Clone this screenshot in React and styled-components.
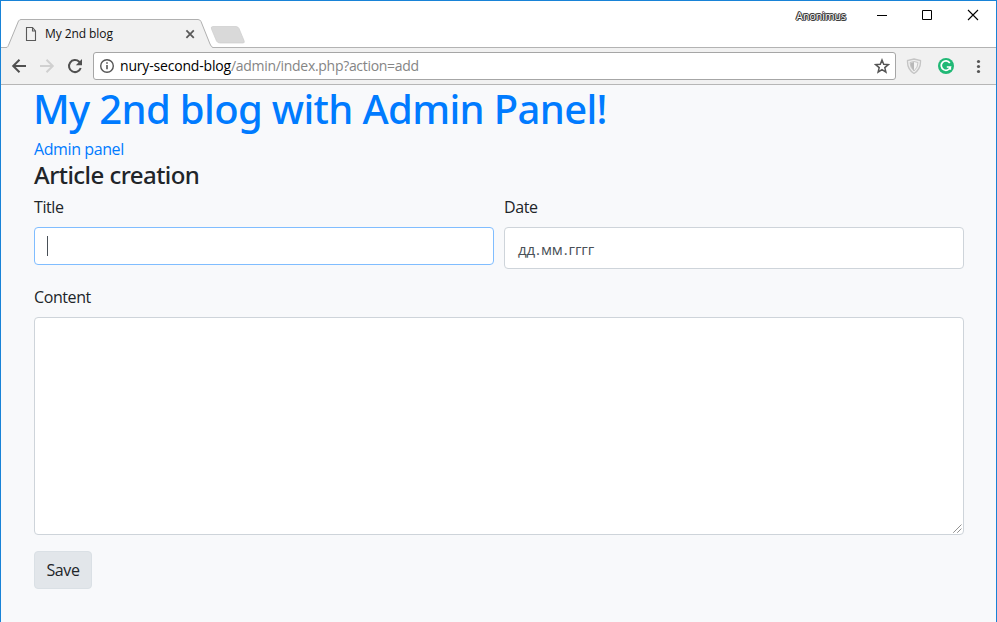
import React from "react";
import styled, { createGlobalStyle } from "styled-components";

const GlobalStyle = createGlobalStyle`
  *, *::before, *::after { box-sizing: border-box; }
  body { margin: 0; background: #f8f9fb; overflow: hidden; }
`;

const BrowserWindow = styled.div`
  display: flex;
  flex-direction: column;
  height: 622px;
  border: 1px solid #1883d7;
  border-bottom: 0;
  background: #f8f9fb;
  font-family: "Open Sans", "Noto Sans", sans-serif;
`;

const TabStrip = styled.header`
  display: flex;
  height: 47px;
  background: #fff;
  box-shadow: inset 0 -1px #b3b3b3;
`;

const Tab = styled.div`
  display: grid;
  width: 207px;
  height: 29px;
  margin: 18px 0 0 5px;
  > * { grid-area: 1 / 1; }
`;

const TabShape = styled.svg`
  width: 207px;
  height: 29px;
`;

const TabContent = styled.div`
  display: flex;
  align-items: center;
  padding: 0 15px 0 19px;
  height: 29px;
`;

const TabTitle = styled.span`
  flex: 1;
  margin-left: 4px;
  font-size: 12px;
  line-height: 16px;
  letter-spacing: -0.08px;
  color: #111;
`;

const NewTab = styled.svg`
  width: 38px;
  height: 20px;
  margin: 24px 0 0 -5px;
`;

const WindowControls = styled.div`
  display: flex;
  align-items: flex-start;
  margin-left: auto;
  padding: 7px 17px 0 0;
`;

const UserName = styled.span`
  margin-right: 30px;
  font-size: 10.5px;
  line-height: 16px;
  color: #fff;
  text-shadow: 1px 0 #333, -1px 0 #333, 0 1px #333, 0 -1px #333, 1px 1px #555, -1px -1px #777;
`;

const ControlIcon = styled.svg`
  width: 12px;
  height: 12px;
  margin: 1px 0 0 ${(p) => p.$gap || 0}px;
  fill: none;
  stroke: #000;
`;

const Toolbar = styled.nav`
  display: flex;
  align-items: center;
  height: 37px;
  flex: none;
  padding: 0 9px 1px 10px;
  background: #f1f1f1;
  border-bottom: 1px solid #b6b6b6;
`;

const ToolIcon = styled.svg`
  flex: none;
  width: 16px;
  height: 16px;
  margin-right: ${(p) => p.$gap || 0}px;
`;

const AddressBar = styled.div`
  display: flex;
  align-items: center;
  width: 803px;
  height: 28px;
  margin-right: 10px;
  padding: 0 5px;
  border: 1px solid #a6a6a6;
  border-radius: 3px;
  background: #fff;
`;

const Address = styled.div`
  flex: 1;
  padding-top: 1px;
  font-size: 14px;
  line-height: 20px;
  letter-spacing: -0.3px;
  color: #858585;
`;

const Host = styled.span`
  color: #000;
  letter-spacing: -0.18px;
`;

const Page = styled.main`
  padding: 1px 32px 0 33px;
  font-size: 16px;
  line-height: 24px;
  letter-spacing: -0.4px;
  color: #212529;
`;

const SiteTitle = styled.h1`
  margin: 0 0 5px -1px;
  font: 500 40px/46px "Noto Sans", sans-serif;
  letter-spacing: -0.65px;
  color: #007bff;
`;

const AdminLink = styled.a`
  display: block;
  width: max-content;
  color: #007bff;
  text-decoration: none;
`;

const FormTitle = styled.h2`
  margin: 0 0 7px;
  font: 500 24px/27px "Noto Sans", sans-serif;
  letter-spacing: -0.55px;
`;

const FieldRow = styled.div`
  display: grid;
  grid-template-columns: 1fr 1fr;
  gap: 10px;
  height: 90px;
`;

const Field = styled.div`
  display: flex;
  flex-direction: column;
`;

const Label = styled.label`
  margin-bottom: 8px;
  line-height: 24px;
`;

const InputBox = styled.div`
  display: flex;
  align-items: center;
  height: ${(p) => p.$height}px;
  padding: 0 12px;
  border: 1px solid ${(p) => (p.$focused ? "#80bdff" : "#ced4da")};
  border-radius: 4px;
  background: #fff;
`;

const Caret = styled.span`
  width: 1px;
  height: 20px;
  background: #495057;
`;

const DateHint = styled.span`
  padding: 1px 0 0 1px;
  font-size: 15px;
  letter-spacing: -0.1px;
  color: #495057;
`;

const DateDot = styled.span`
  margin: 0 1px;
`;

const ContentBox = styled.div`
  display: flex;
  align-items: flex-end;
  justify-content: flex-end;
  height: 218px;
  padding: 1px;
  border: 1px solid #ced4da;
  border-radius: 4px;
  background: #fff;
`;

const ResizeGrip = styled.svg`
  width: 9px;
  height: 9px;
`;

const SaveButton = styled.button`
  display: block;
  width: 58px;
  height: 38px;
  margin-top: 16px;
  padding: 0;
  border: 1px solid #dae0e5;
  border-radius: 4px;
  background: #e2e6ea;
  font: inherit;
  letter-spacing: -0.4px;
  color: #212529;
`;

export default function App() {
  return (
    <BrowserWindow>
      <GlobalStyle />
      <TabStrip>
        <Tab>
          <TabShape viewBox="0 0 207 29">
            <path d="M0 28.5 C2 28.5 2 27 3 25 L12.5 2 Q13.5 .5 15 .5 H192 Q194 .5 195 2.5 L204 25 Q205.5 28.5 207 28.5 V29 H0Z" fill="#f1f1f1" />
            <path d="M0 28.5 C2 28.5 2 27 3 25 L12.5 2 Q13.5 .5 15 .5 H192 Q194 .5 195 2.5 L204 25 Q205.5 28.5 207 28.5" fill="none" stroke="#b0b0b0" />
          </TabShape>
          <TabContent>
            <ToolIcon viewBox="0 0 16 16" fill="none" stroke="#5a5a5a">
              <path d="M1.5 1.5h6l3 3.500v9.500h-9zM7.500 1.500v3.500h3" strokeWidth="1.1" />
            </ToolIcon>
            <TabTitle>My 2nd blog</TabTitle>
            <ToolIcon viewBox="0 0 16 16" stroke="#5a5a5a" strokeWidth="1.8">
              <path d="M4.4 4.4l7.4 7.4M11.8 4.4l-7.4 7.4" />
            </ToolIcon>
          </TabContent>
        </Tab>
        <NewTab viewBox="0 0 38 20">
          <path d="M5 1.5h23q2 0 3 2l5 12q1 2.500-1 2.500H12q-2.500 0-3.500-2l-5-12Q2.500 1.500 5 1.500Z" fill="#d9d9d9" stroke="#cdcdcd" strokeWidth=".7" />
        </NewTab>
        <WindowControls>
          <UserName>Anonimus</UserName>
          <ControlIcon viewBox="0 0 12 12"><path d="M1 6.500h10" /></ControlIcon>
          <ControlIcon viewBox="0 0 12 12" $gap={33}><path d="M1.500 1.500h9v9h-9z" /></ControlIcon>
          <ControlIcon viewBox="0 0 12 12" $gap={34}><path d="M1 1l10 10M11 1L1 11" strokeWidth="1.1" /></ControlIcon>
        </WindowControls>
      </TabStrip>
      <Toolbar>
        <ToolIcon viewBox="0 0 16 16" $gap={12} fill="none" stroke="#505050" strokeWidth="2">
          <path d="M15 8H2.500M8.500 1.700L2.200 8l6.300 6.300" />
        </ToolIcon>
        <ToolIcon viewBox="0 0 16 16" $gap={12} fill="none" stroke="#d0d0d0" strokeWidth="2">
          <path d="M1 8h12.500M7.500 1.700L13.800 8l-6.300 6.300" />
        </ToolIcon>
        <ToolIcon viewBox="0 0 16 16" $gap={10} fill="none" stroke="#505050" strokeWidth="2">
          <path d="M13.700 10A6 6 0 1 1 12.200 3.800L13 4.600" />
          <path d="M15 1v6.200H8.800z" fill="#505050" stroke="none" />
        </ToolIcon>
        <AddressBar>
          <ToolIcon viewBox="0 0 16 16" $gap={5} fill="none" stroke="#555">
            <circle cx="8" cy="8" r="6.300" strokeWidth="1.400" />
            <path d="M8 7v4.300M8 4.200v1.600" strokeWidth="1.600" />
          </ToolIcon>
          <Address><Host>nury-second-blog</Host>/admin/index.php?action=add</Address>
          <ToolIcon viewBox="0 0 16 16" fill="none" stroke="#555" strokeWidth="1.500">
            <path d="M8 2l1.700 4.300 4.600.3-3.500 3 1.100 4.500L8 11.700l-3.900 2.400 1.100-4.500-3.500-3 4.600-.3z" />
          </ToolIcon>
        </AddressBar>
        <ToolIcon viewBox="0 0 16 16" $gap={16}>
          <path d="M8 1L14.500 2.500Q15 11 8 15.500Q1 11 1.500 2.500Z" fill="#eee" stroke="#c5c5c5" strokeWidth="1.300" />
          <path d="M8 3.500L12 4.500Q12 9.500 8 13Q4 9.500 4 4.500Z" fill="#f4f4f4" stroke="#c5c5c5" />
          <path d="M8 4v8.500Q4.500 9.500 4.500 5Z" fill="#b8b8b8" />
        </ToolIcon>
        <ToolIcon viewBox="0 0 16 16" $gap={16}>
          <circle cx="8" cy="8" r="8" fill="#20b875" />
          <path d="M11.800 4.900A4.700 4.700 0 1 0 12.400 9H8.800M12.300 8.500v3.200" fill="none" stroke="#fff" strokeWidth="1.700" />
        </ToolIcon>
        <ToolIcon viewBox="0 0 16 16" fill="#555">
          <circle cx="8.500" cy="3.500" r="1.600" /><circle cx="8.500" cy="8.500" r="1.600" /><circle cx="8.500" cy="13.500" r="1.600" />
        </ToolIcon>
      </Toolbar>
      <Page>
        <SiteTitle>My 2nd blog with Admin Panel!</SiteTitle>
        <AdminLink>Admin panel</AdminLink>
        <FormTitle>Article creation</FormTitle>
        <FieldRow>
          <Field>
            <Label>Title</Label>
            <InputBox $height={38} $focused><Caret /></InputBox>
          </Field>
          <Field>
            <Label>Date</Label>
            <InputBox $height={42}>
              <DateHint>дд<DateDot>.</DateDot>мм<DateDot>.</DateDot>гггг</DateHint>
            </InputBox>
          </Field>
        </FieldRow>
        <Field>
          <Label>Content</Label>
          <ContentBox>
            <ResizeGrip viewBox="0 0 9 9">
              <path d="M.5 8.500l8-8M4.500 8.500l4-4" stroke="#555" strokeDasharray="1.100 .3" />
            </ResizeGrip>
          </ContentBox>
        </Field>
        <SaveButton>Save</SaveButton>
      </Page>
    </BrowserWindow>
  );
}
